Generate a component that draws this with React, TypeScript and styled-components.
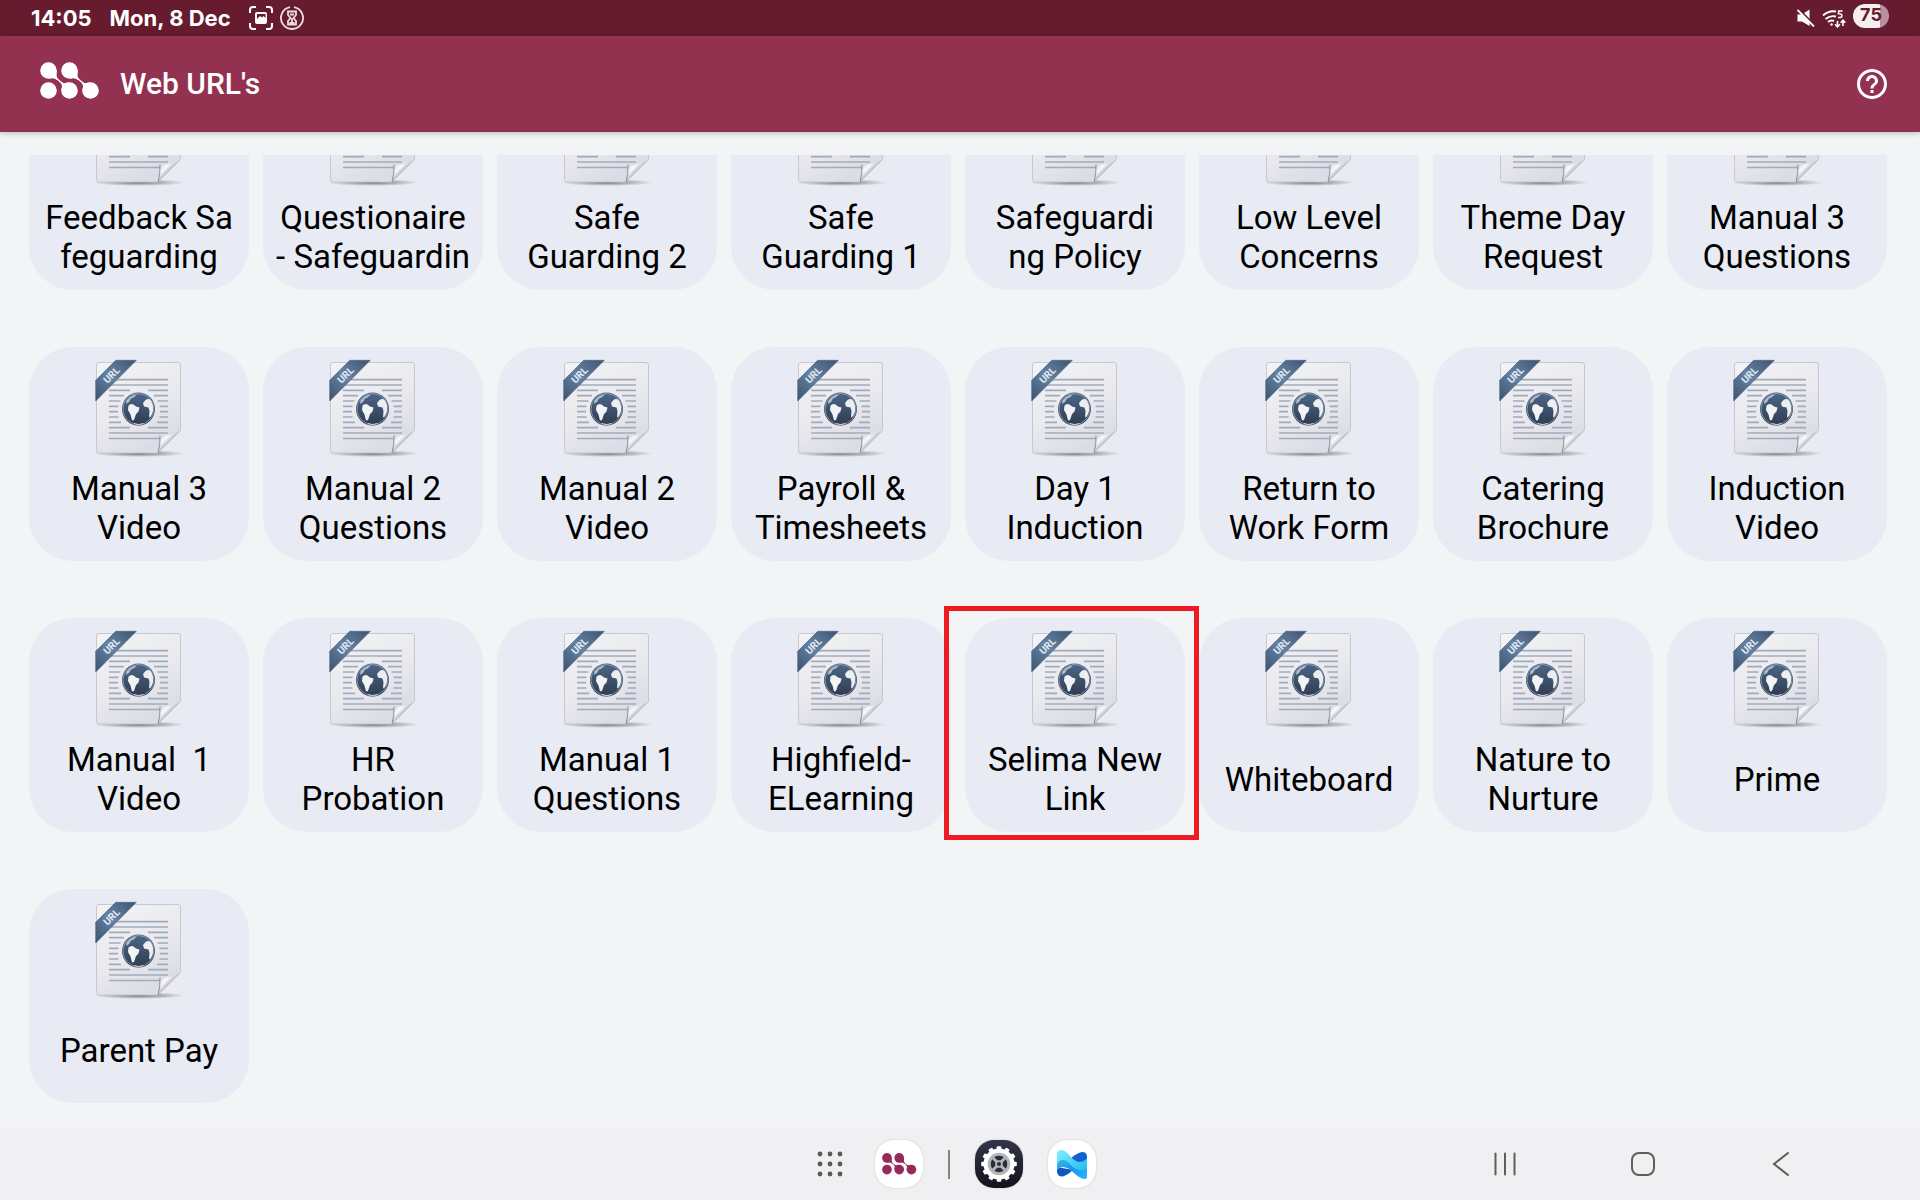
import React, { useId } from "react";
import styled, { createGlobalStyle } from "styled-components";

const GlobalStyle = createGlobalStyle`
  * { box-sizing: border-box; }
  body { margin: 0; background: #f2f4f6; font-family: Roboto, "Liberation Sans", sans-serif; }
  button { border: 0; padding: 0; margin: 0; background: none; font: inherit; color: inherit; cursor: pointer; }
  svg { display: block; flex: none; }
`;

const Screen = styled.div`
  display: flex;
  flex-direction: column;
  height: 100vh;
  overflow: hidden;
`;

const StatusBar = styled.div`
  flex: none;
  display: flex;
  align-items: center;
  justify-content: space-between;
  height: 36px;
  padding: 0 31px;
  background: #661b2f;
  color: #fff;
  font-family: Inter, Roboto, sans-serif;
  font-size: 22px;
  font-weight: 700;
  line-height: 36px;
`;

const StatusGroup = styled.div<{ $gap: number }>`
  display: flex;
  align-items: center;
  gap: ${(p) => p.$gap}px;
`;

const Battery = styled.span`
  width: 36px;
  height: 24px;
  margin-bottom: 4px;
  border-radius: 12px;
  background: linear-gradient(90deg, #f5eff1 75%, #b98fa0 75%);
  color: #661b2f;
  font-size: 18px;
  line-height: 21px;
  text-align: center;
`;

const AppBar = styled.header`
  flex: none;
  display: flex;
  align-items: center;
  height: 96px;
  padding: 0 30px 0 40px;
  background: #933250;
  color: #fff;
  box-shadow: 0 1px 6px rgba(0, 0, 0, 0.25);
`;

const Brand = styled.span`
  padding-bottom: 7px;
`;

const Title = styled.h1`
  flex: 1;
  margin: 0 0 0 20px;
  font-size: 30px;
  font-weight: 500;
  line-height: 36px;
`;

const LinkList = styled.main`
  flex: 1;
  min-height: 0;
  display: flex;
  flex-direction: column;
  justify-content: flex-end;
  margin-top: 23px;
  padding: 0 33px 25px 29px;
  overflow: hidden;
`;

const Grid = styled.div`
  display: grid;
  grid-template-columns: repeat(8, minmax(0, 1fr));
  gap: 57px 14px;
`;

const Card = styled.a<{ $highlighted?: boolean }>`
  position: relative;
  display: flex;
  flex-direction: column;
  align-items: center;
  height: 214px;
  padding-top: 9px;
  border-radius: 44px;
  background: #e8ebf3;
  color: #000;
  text-decoration: none;

  ${(p) =>
    p.$highlighted &&
    `&::after {
      content: "";
      position: absolute;
      z-index: 1;
      inset: -12px -14px -8px -21px;
      border: 5px solid #ed1c24;
    }`}
`;

const CardLabel = styled.span`
  display: flex;
  align-items: center;
  height: 78px;
  margin-top: 8px;
  font-size: 33px;
  line-height: 39px;
  text-align: center;
  white-space: pre;
`;

const NavBar = styled.nav`
  flex: none;
  display: grid;
  grid-template-columns: 1fr auto 1fr;
  align-items: center;
  height: 72px;
  padding: 0 70px 0 56px;
  background: #f0f0f2;
  color: #5e5e5e;
`;

const Dock = styled.div`
  grid-column: 2;
  display: flex;
  align-items: center;
  gap: 25px;
`;

const AllApps = styled.button`
  display: grid;
  place-items: center;
  width: 40px;
  height: 48px;
`;

const DockApp = styled.button<{ $fill: string }>`
  display: grid;
  place-items: center;
  width: 48px;
  height: 48px;
  border-radius: 19px;
  background: ${(p) => p.$fill};
  box-shadow: 0 0 2px rgba(0, 0, 0, 0.2);
`;

const Divider = styled.span`
  width: 2px;
  height: 29px;
  background: #858585;
`;

const SystemKeys = styled.div`
  display: flex;
  justify-content: flex-end;
`;

const SystemKey = styled.button`
  display: grid;
  place-items: center;
  width: 138px;
  height: 48px;
`;

const BrandLogo = ({ width, color }: { width: number; color: string }) => (
  <svg width={width} viewBox="0 0 60 37" fill={color} aria-hidden="true">
    <circle cx="8.500" cy="28.500" r="8.300" />
    {[8.500, 29.500].map((x) => (
      <g key={x} transform={`translate(${x} 8.500)`}>
        <circle r="8.300" />
        <path d="M0 0L1 8.200Q5.500 7 8.500 9.500L9.200 8.500Q7.600 6 8.300 0Z" />
        <path d="M7.500 7.500L14.500 13.500" stroke={color} strokeWidth="1.600" />
        <circle cx="21" cy="20" r="8.300" />
        <path d="M21 20L12.800 19Q14.500 15 12.200 12.800L13.300 11.700Q16.500 13.500 20 11.800Z" />
      </g>
    ))}
  </svg>
);

const LINES: [number, number][] = [
  [23.7, 0], [29, 0], [34.3, 9], [39.7, 15], [45, 18.5], [50.3, 20.5],
  [55.7, 21], [61, 20.5], [66.3, 18], [71.7, 9], [77, 0], [82.5, 0],
];

const UrlDocIcon = () => {
  const id = useId();
  const ref = (name: string) => `url(#${id}${name})`;
  return (
    <svg width="100" height="105" viewBox="0 0 100 105" aria-hidden="true">
      <defs>
        <linearGradient id={`${id}paper`} x1="0" y1="0" x2="0.5" y2="1">
          <stop offset="0" stopColor="#f4f4f6" />
          <stop offset="0.6" stopColor="#e9e9ee" />
          <stop offset="1" stopColor="#dcdce5" />
        </linearGradient>
        <linearGradient id={`${id}band`} x1="0" y1="1" x2="1" y2="0">
          <stop offset="0" stopColor="#3d536f" />
          <stop offset="0.5" stopColor="#6482a4" />
          <stop offset="1" stopColor="#3d536f" />
        </linearGradient>
        <linearGradient id={`${id}globe`} x1="0" y1="0" x2="0" y2="1">
          <stop offset="0" stopColor="#4d6788" />
          <stop offset="1" stopColor="#2e3c4f" />
        </linearGradient>
        <linearGradient id={`${id}fold`} x1="0" y1="0" x2="1" y2="1">
          <stop offset="0.1" stopColor="#c4c4ca" />
          <stop offset="0.35" stopColor="#fbfbfc" />
          <stop offset="0.55" stopColor="#a9a9b0" />
        </linearGradient>
        <radialGradient id={`${id}shade`}>
          <stop offset="0" stopColor="#55555c" stopOpacity="0.8" />
          <stop offset="1" stopColor="#55555c" stopOpacity="0" />
        </radialGradient>
      </defs>
      <ellipse cx="50" cy="97.5" rx="46" ry="3.5" fill={ref("shade")} />
      <path d="M10 6.5H89Q91.5 6.5 91.5 9V74.5L69 97H10Q7.5 97 7.5 94.5V9Q7.5 6.5 10 6.5Z" fill={ref("paper")} stroke="#c3c4ca" strokeWidth="0.9" />
      <g stroke="#a0acba" strokeWidth="1.7">
        {LINES.map(([y, half]) =>
          half === 0 ? (
            <path key={y} d={`M20 ${y}H79`} />
          ) : (
            <path key={y} d={`M20 ${y}H${50 - half}M${50 + half} ${y}H79`} />
          )
        )}
      </g>
      <circle cx="49.5" cy="53" r="16.5" fill={ref("globe")} />
      <circle cx="49.5" cy="53" r="15.5" fill="none" stroke="#9fb0c4" strokeWidth="0.7" />
      <path d="M39.5 49.5Q42 47 44.500 48.500L47 50.500L50.500 51.500L49.500 55.500L47 58L45 64L43 64.500L41.500 58.500L39 54Z" fill="#f2f3f6" />
      <path d="M56.500 44Q59.500 42 62 44.500Q65.500 50 63.500 57Q62 61 60 61.500L60.500 55L59.500 51.500L55 50.500L54 47Z" fill="#eceef2" />
      <path d="M37.500 44.500L41 41L45 39L48 38.500L44.500 41.500L42 42.500L40 46L37 48Z" fill="#b4c0cf" />
      <path d="M45 67.500Q49.500 69.500 54.500 67.500" fill="none" stroke="#c6cdd6" strokeWidth="1.2" />
      <path d="M6.700 24.300L26.700 4.300H47.300L6.700 45Z" fill={ref("band")} stroke="#46607f" strokeWidth="0.6" />
      <text x="22.5" y="22.500" transform="rotate(-45 22.5 19)" textAnchor="middle" fontFamily="Roboto, sans-serif" fontSize="10" fontWeight="700" fill="#e3ebf3">URL</text>
      <path d="M91.500 74.500L69 97Q71.500 88 71 79.500Q80 81.500 91.500 74.500Z" fill={ref("fold")} />
      <path d="M71 79.500Q71.500 88 69 97" fill="none" stroke="#8d8d96" strokeWidth="1" />
    </svg>
  );
};

const CaptureIcon = () => (
  <svg width="24" height="24" viewBox="0 0 24 24" fill="none" stroke="#fff" strokeWidth="2" aria-hidden="true">
    <path d="M1 7V4Q1 1 4 1H7M17 1H20Q23 1 23 4V7M23 17V20Q23 23 20 23H17M7 23H4Q1 23 1 20V17" />
    <path fillRule="evenodd" d="M8 6H16Q18 6 18 8V16Q18 18 16 18H8Q6 18 6 16V8Q6 6 8 6ZM8 13L11 10L13 11.500L14.500 10L16.500 12V8H8Z" fill="#fff" stroke="none" />
  </svg>
);

const HourglassIcon = () => (
  <svg width="24" height="24" viewBox="0 0 24 24" fill="none" stroke="#ecdde1" strokeWidth="1.8" aria-hidden="true">
    <path d="M14 1.200A11 11 0 1 1 10 1.200" />
    <path d="M8 5.500H16V9L13.500 12L16 15V18.500H8V15L10.500 12L8 9Z" />
    <path d="M10 8.500H14M12 12V17M9.500 17H14.500" />
  </svg>
);

const MuteIcon = () => (
  <svg width="18" height="18" viewBox="0 0 18 18" aria-hidden="true">
    <path d="M0.500 5.500H5L12.500 0.500V17L5 12.500H0.500Z" fill="#fff" />
    <path d="M1 -0.500L18 16.500" stroke="#661b2f" strokeWidth="2" />
    <path d="M0.500 1L17 17.500" stroke="#fff" strokeWidth="1.800" />
  </svg>
);

const WifiIcon = () => (
  <svg width="24" height="19" viewBox="0 0 24 19" fill="none" stroke="#fff" strokeWidth="1.900" aria-hidden="true">
    <path d="M1 6.500Q7 1 14 2.500M3.500 10Q8.500 6 14 7.500M6 13Q9 10.800 12 12" />
    <circle cx="9.500" cy="15.500" r="1.200" fill="#fff" stroke="none" />
    <path d="M20.500 2H16.700L16.400 4.800Q20 4.500 20 6.700Q20 9 16 8.500" strokeWidth="1.500" />
    <path d="M15.500 12V17.500M13 15.300L15.500 17.800L18 15.300M21 17V11.500M18.700 13.700L21 11.200L23.300 13.700" strokeWidth="1.600" />
  </svg>
);

const HelpIcon = () => (
  <svg width="36" height="36" viewBox="0 0 24 24" fill="#fff" aria-hidden="true">
    <path d="M11 18h2v-2h-2v2zm1-16C6.480 2 2 6.480 2 12s4.480 10 10 10 10-4.480 10-10S17.520 2 12 2zm0 18c-4.410 0-8-3.590-8-8s3.590-8 8-8 8 3.590 8 8-3.590 8-8 8zm0-14c-2.210 0-4 1.790-4 4h2c0-1.100.9-2 2-2s2 .9 2 2c0 2-3 1.750-3 5h2c0-2.250 3-2.500 3-5 0-2.210-1.790-4-4-4z" />
  </svg>
);

const AppsIcon = () => (
  <svg width="26" height="26" viewBox="-13 -13 26 26" fill="#5a5a5a" aria-hidden="true">
    {[-10, 0, 10].map((y) => [-10, 0, 10].map((x) => <circle key={`${x},${y}`} cx={x} cy={y} r="2.4" />))}
  </svg>
);

const GearIcon = () => (
  <svg width="38" height="38" viewBox="-19 -19 38 38" aria-hidden="true">
    <circle r="15.5" fill="#fff" />
    {Array.from({ length: 12 }, (_, i) => (
      <rect key={i} x="-2.3" y="-17.8" width="4.6" height="5" rx="1" fill="#fff" transform={`rotate(${i * 30})`} />
    ))}
    <circle r="11.3" fill="#b5b6bc" />
    <circle r="8.3" fill="#2a2c38" />
    <path d="M-6 -6L6 6M6 -6L-6 6" stroke="#b5b6bc" strokeWidth="3" />
    <circle r="3.8" fill="#b5b6bc" />
    <circle r="2" fill="#2a2c38" />
  </svg>
);

const RibbonIcon = () => (
  <svg width="30" height="29" viewBox="0 0 30 29" aria-hidden="true">
    <defs>
      <linearGradient id="ribbonLight" x1="0" y1="0" x2="1" y2="0.6">
        <stop offset="0" stopColor="#86efff" />
        <stop offset="1" stopColor="#2cc4f2" />
      </linearGradient>
      <linearGradient id="ribbonMid" x1="0" y1="0" x2="1" y2="1">
        <stop offset="0" stopColor="#35bdf5" />
        <stop offset="0.5" stopColor="#1c93ea" />
        <stop offset="1" stopColor="#2cb8ff" />
      </linearGradient>
    </defs>
    <path d="M14 8Q20 3 25 2Q30 2 30 7V12L20 15Z" fill="#1261cf" />
    <path d="M0 17V22Q1 27 6 26.500Q11 25 16 20Z" fill="#0f58c4" />
    <path d="M0 12Q1 8 8 9Q12 12 18 18Q24 21 30 14V27Q30 29 27 29Q22 28 17 23Q11 17 6 17Q2 17 0 21Z" fill="url(#ribbonMid)" />
    <path d="M0 3Q1 0 4 0Q8 0 12 5Q17 11 22 12Q27 12 30 8V17Q28 21 22 20Q17 19 12 13Q8 9 4 10Q1 11 0 15Z" fill="url(#ribbonLight)" />
  </svg>
);

const LABELS: string[] = [
  "Feedback Sa\nfeguarding", "Questionaire\n- Safeguardin", "Safe\nGuarding 2", "Safe\nGuarding 1",
  "Safeguardi\nng Policy", "Low Level\nConcerns", "Theme Day\nRequest", "Manual 3\nQuestions",
  "Manual 3\nVideo", "Manual 2\nQuestions", "Manual 2\nVideo", "Payroll &\nTimesheets",
  "Day 1\nInduction", "Return to\nWork Form", "Catering\nBrochure", "Induction\nVideo",
  "Manual  1\nVideo", "HR\nProbation", "Manual 1\nQuestions", "Highfield-\nELearning",
  "Selima New\nLink", "Whiteboard", "Nature to\nNurture", "Prime",
  "Parent Pay",
];

export default function App() {
  return (
    <Screen>
      <GlobalStyle />
      <StatusBar>
        <StatusGroup $gap={18}>
          <span>14:05</span>
          <span>Mon, 8 Dec</span>
          <StatusGroup $gap={7}>
            <CaptureIcon />
            <HourglassIcon />
          </StatusGroup>
        </StatusGroup>
        <StatusGroup $gap={7}>
          <MuteIcon />
          <WifiIcon />
          <Battery>75</Battery>
        </StatusGroup>
      </StatusBar>
      <AppBar>
        <Brand><BrandLogo width={60} color="#fff" /></Brand>
        <Title>Web URL's</Title>
        <button aria-label="Help"><HelpIcon /></button>
      </AppBar>
      <LinkList>
        <Grid>
          {LABELS.map((label) => (
            <Card key={label} href="#" $highlighted={label.startsWith("Selima")}>
              <UrlDocIcon />
              <CardLabel>{label}</CardLabel>
            </Card>
          ))}
        </Grid>
      </LinkList>
      <NavBar>
        <Dock>
          <AllApps aria-label="All apps"><AppsIcon /></AllApps>
          <DockApp $fill="#fff" aria-label="Web links"><BrandLogo width={35} color="#96295a" /></DockApp>
          <Divider />
          <DockApp $fill="linear-gradient(#33354a, #13131b)" aria-label="Settings"><GearIcon /></DockApp>
          <DockApp $fill="#fff" aria-label="Launcher"><RibbonIcon /></DockApp>
        </Dock>
        <SystemKeys>
          <SystemKey aria-label="Recent apps">
            <svg width="24" height="24" viewBox="0 0 24 24" stroke="currentColor" strokeWidth="2" strokeLinecap="round">
              <path d="M2.500 1.500V22.500M12 1.500V22.500M21.500 1.500V22.500" />
            </svg>
          </SystemKey>
          <SystemKey aria-label="Home">
            <svg width="26" height="26" viewBox="0 0 26 26" fill="none" stroke="currentColor" strokeWidth="2">
              <rect x="2" y="2" width="22" height="22" rx="7" />
            </svg>
          </SystemKey>
          <SystemKey aria-label="Back">
            <svg width="24" height="24" viewBox="0 0 24 24" fill="none" stroke="currentColor" strokeWidth="2" strokeLinecap="round">
              <path d="M19 1L5 12L19 23" />
            </svg>
          </SystemKey>
        </SystemKeys>
      </NavBar>
    </Screen>
  );
}
